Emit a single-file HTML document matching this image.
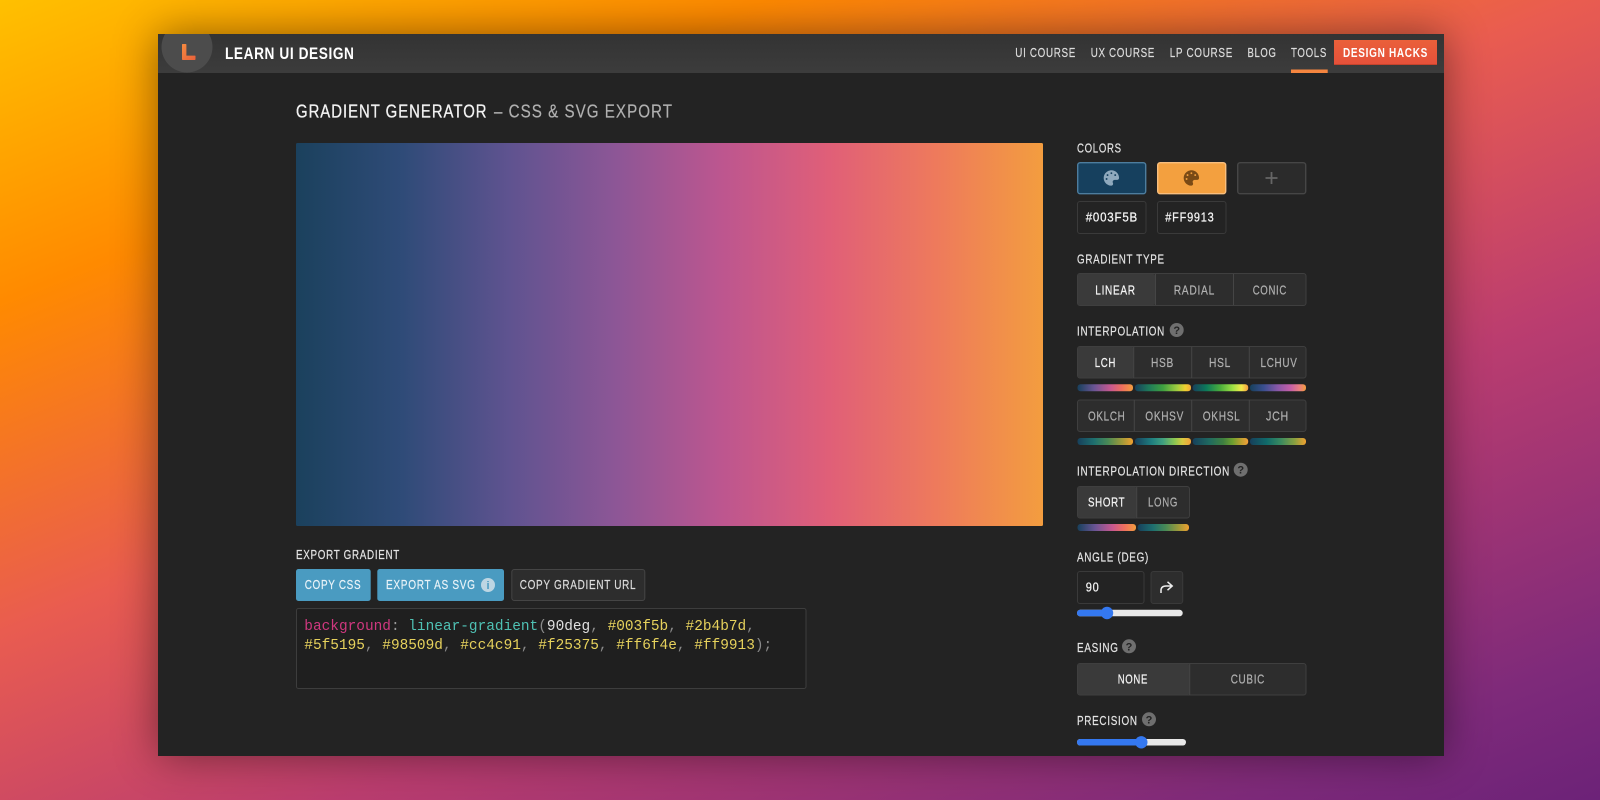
<!DOCTYPE html>
<html lang="en"><head><meta charset="utf-8"><title>Gradient Generator</title>
<style>
html,body{margin:0;padding:0;width:1600px;height:800px;overflow:hidden;background:linear-gradient(158.2deg,#ffc000 0%,#ff8a00 21%,#e95c50 44%,#bb3d6f 65%,#7e2a7a 90%,#6c2278 100%)}
#win{position:absolute;left:158px;top:34px;width:1286px;height:722px;background:#232323;box-shadow:0 0 40px rgba(0,0,0,.45)}
svg{position:absolute;left:0;top:0}
text{font-family:"Liberation Sans",sans-serif;font-size:13px;fill:#ddd;stroke:#ddd;stroke-width:.2;font-kerning:normal;letter-spacing:.9px}
.l{fill:#e4e4e4;stroke:#e4e4e4;font-size:12.5px}
.a{fill:#f2f2f2;stroke:#f2f2f2;stroke-width:.3}
.b{fill:#b0b0b0;stroke:#b0b0b0}
.w{fill:#f4f4f4;stroke:#f4f4f4;stroke-width:.25}
.m{font-family:"Liberation Mono",monospace;font-size:14.45px;letter-spacing:0;stroke:none}
.q{font-size:11px;font-weight:bold;fill:#232323;stroke:none;text-anchor:middle;letter-spacing:0}
</style></head><body>
<div id="win"></div>
<svg width="1600" height="800" viewBox="0 0 1600 800" xmlns="http://www.w3.org/2000/svg">
<defs>
<linearGradient id="hd" x1="0" y1="0" x2="0" y2="1"><stop offset="0" stop-color="#333"/><stop offset="1" stop-color="#3c3c3c"/></linearGradient>
<linearGradient id="main"><stop offset="0" stop-color="#1b415d"/><stop offset=".143" stop-color="#2f4b78"/><stop offset=".286" stop-color="#5f5390"/><stop offset=".429" stop-color="#8d5696"/><stop offset=".571" stop-color="#bd568f"/><stop offset=".714" stop-color="#e05f78"/><stop offset=".857" stop-color="#ee7a5c"/><stop offset="1" stop-color="#f39d3f"/></linearGradient>
<linearGradient id="lch"><stop offset="0" stop-color="#17405c"/><stop offset=".3" stop-color="#6a5595"/><stop offset=".6" stop-color="#c9588f"/><stop offset=".8" stop-color="#ee6f5f"/><stop offset="1" stop-color="#f39d3f"/></linearGradient>
<linearGradient id="hsb"><stop offset="0" stop-color="#17405c"/><stop offset=".25" stop-color="#1f7a5a"/><stop offset=".5" stop-color="#3fa040"/><stop offset=".75" stop-color="#a0cc40"/><stop offset=".9" stop-color="#f0d030"/><stop offset="1" stop-color="#f3a83a"/></linearGradient>
<linearGradient id="hsl"><stop offset="0" stop-color="#17405c"/><stop offset=".25" stop-color="#0d7a5a"/><stop offset=".5" stop-color="#4cae3c"/><stop offset=".72" stop-color="#9de045"/><stop offset=".88" stop-color="#f0e94a"/><stop offset="1" stop-color="#f39d3f"/></linearGradient>
<linearGradient id="luv"><stop offset="0" stop-color="#17405c"/><stop offset=".25" stop-color="#3b4f8f"/><stop offset=".5" stop-color="#8a58a8"/><stop offset=".72" stop-color="#c45fa8"/><stop offset=".88" stop-color="#ea7f80"/><stop offset="1" stop-color="#f39d3f"/></linearGradient>
<linearGradient id="okl"><stop offset="0" stop-color="#17405c"/><stop offset=".3" stop-color="#1e6f6f"/><stop offset=".55" stop-color="#4a8a55"/><stop offset=".8" stop-color="#a09a3a"/><stop offset="1" stop-color="#f0a030"/></linearGradient>
<linearGradient id="oks"><stop offset="0" stop-color="#17405c"/><stop offset=".3" stop-color="#1f7f80"/><stop offset=".5" stop-color="#40a080"/><stop offset=".72" stop-color="#90c850"/><stop offset=".85" stop-color="#d8c840"/><stop offset="1" stop-color="#f3a03a"/></linearGradient>
<linearGradient id="okh"><stop offset="0" stop-color="#17405c"/><stop offset=".3" stop-color="#1f6a60"/><stop offset=".55" stop-color="#3f8040"/><stop offset=".72" stop-color="#6fa030"/><stop offset=".88" stop-color="#c0a030"/><stop offset="1" stop-color="#f3a03a"/></linearGradient>
<linearGradient id="jch"><stop offset="0" stop-color="#17405c"/><stop offset=".3" stop-color="#106a6a"/><stop offset=".55" stop-color="#3a8a60"/><stop offset=".8" stop-color="#8aa040"/><stop offset="1" stop-color="#f0a030"/></linearGradient>
<linearGradient id="lg" x1="0" y1="0" x2="1" y2="1"><stop offset="0" stop-color="#f58a40"/><stop offset="1" stop-color="#e8603a"/></linearGradient>
<linearGradient id="dh" x1="0" y1="0" x2="0" y2="1"><stop offset="0" stop-color="#ea603a"/><stop offset="1" stop-color="#e5503a"/></linearGradient>
<clipPath id="hc"><rect x="158" y="34" width="1286" height="39"/></clipPath>
</defs>

<!-- header -->
<rect x="158" y="34" width="1286" height="39" fill="url(#hd)"/>
<circle cx="187" cy="47" r="25.5" fill="#4c4c4c" clip-path="url(#hc)"/>
<path d="M182 44.7q0-.7.7-.7h3q.7 0 .7.7V55.6h8.6q.5 0 .5.5v3.2q0 .7-.7.7h-12.100q-.7 0-.7-.7z" fill="url(#lg)"/>
<text x="225" y="59" style="font-size:16.5px;font-weight:bold;fill:#fff;stroke:none;letter-spacing:.7px" textLength="129.5" lengthAdjust="spacingAndGlyphs">LEARN UI DESIGN</text>
<text x="1015.3" y="57" textLength="60.7" lengthAdjust="spacingAndGlyphs">UI COURSE</text>
<text x="1090.7" y="57" textLength="64.3" lengthAdjust="spacingAndGlyphs">UX COURSE</text>
<text x="1169.7" y="57" textLength="63.3" lengthAdjust="spacingAndGlyphs">LP COURSE</text>
<text x="1247.5" y="57" textLength="29" lengthAdjust="spacingAndGlyphs">BLOG</text>
<text x="1291" y="57" textLength="36" lengthAdjust="spacingAndGlyphs">TOOLS</text>
<rect x="1291" y="69.5" width="36.7" height="3.5" fill="#f5853f"/>
<rect x="1334" y="40" width="103" height="25" fill="url(#dh)"/>
<rect x="1334" y="64" width="103" height="1" fill="#c6432c"/>
<text x="1343" y="57" style="font-weight:bold;fill:#fff;stroke:none" textLength="85" lengthAdjust="spacingAndGlyphs">DESIGN HACKS</text>

<!-- title -->
<text x="296" y="117.7" class="a" style="font-size:18px;letter-spacing:1.2px" textLength="191.5" lengthAdjust="spacingAndGlyphs">GRADIENT GENERATOR</text>
<text x="494" y="117.7" class="b" style="font-size:18px;letter-spacing:1.2px" textLength="179" lengthAdjust="spacingAndGlyphs">– CSS &amp; SVG EXPORT</text>

<!-- gradient -->
<rect x="296" y="143" width="747" height="383" rx="1.5" fill="url(#main)"/>

<!-- export -->
<text x="296" y="559" class="l" textLength="104" lengthAdjust="spacingAndGlyphs">EXPORT GRADIENT</text>
<rect x="296" y="569" width="74.7" height="32" rx="2.5" fill="#4a9bc1"/>
<text x="304.7" y="589" style="fill:#e9f3f8;stroke:#e9f3f8" textLength="56.6" lengthAdjust="spacingAndGlyphs">COPY CSS</text>
<rect x="377.3" y="569" width="126.7" height="32" rx="2.5" fill="#4a9bc1"/>
<text x="386" y="589" style="fill:#e9f3f8;stroke:#e9f3f8" textLength="89.7" lengthAdjust="spacingAndGlyphs">EXPORT AS SVG</text>
<circle cx="488" cy="585" r="7" fill="#bdd6e3"/>
<text x="488" y="589" class="q" style="fill:#4a9bc1">i</text>
<rect x="511.8" y="569.5" width="133" height="31" rx="2.5" fill="#2d2d2d" stroke="#454545"/>
<text x="519.7" y="589" textLength="116.6" lengthAdjust="spacingAndGlyphs">COPY GRADIENT URL</text>
<rect x="296.5" y="608.5" width="509.5" height="80" rx="2" fill="#1f1f1f" stroke="#3d3d3d"/>
<text x="304.3" y="630" class="m" xml:space="preserve"><tspan fill="#d0387f">background</tspan><tspan fill="#9a9a9a">: </tspan><tspan fill="#4fc1b4">linear-gradient</tspan><tspan fill="#8a8a8a">(</tspan><tspan fill="#e0e0e0">90deg</tspan><tspan fill="#8a8a8a">, </tspan><tspan fill="#e6d15c">#003f5b</tspan><tspan fill="#8a8a8a">, </tspan><tspan fill="#e6d15c">#2b4b7d</tspan><tspan fill="#8a8a8a">,</tspan></text>
<text x="304.3" y="649" class="m" xml:space="preserve"><tspan fill="#e6d15c">#5f5195</tspan><tspan fill="#8a8a8a">, </tspan><tspan fill="#e6d15c">#98509d</tspan><tspan fill="#8a8a8a">, </tspan><tspan fill="#e6d15c">#cc4c91</tspan><tspan fill="#8a8a8a">, </tspan><tspan fill="#e6d15c">#f25375</tspan><tspan fill="#8a8a8a">, </tspan><tspan fill="#e6d15c">#ff6f4e</tspan><tspan fill="#8a8a8a">, </tspan><tspan fill="#e6d15c">#ff9913</tspan><tspan fill="#8a8a8a">);</tspan></text>

<!-- colors -->
<text x="1077" y="152.3" class="l" textLength="44.7" lengthAdjust="spacingAndGlyphs">COLORS</text>
<rect x="1077.7" y="162.7" width="68" height="31" rx="2.5" fill="#16405e" stroke="#4d7d9e" stroke-width="1.4"/>
<rect x="1157.7" y="162.7" width="68" height="31" rx="2.5" fill="#f3a03f" stroke="#f8be7e" stroke-width="1.4"/>
<rect x="1237.7" y="162.7" width="68" height="31" rx="2.5" fill="#2b2b2b" stroke="#464646" stroke-width="1.4"/>
<path transform="translate(1103.7,170.3) scale(.03)" fill="#8fa9bd" d="M204.3 5C104.9 24.4 24.8 104.3 5.2 203.4c-37 187 131.7 326.4 258.8 306.7 41.2-6.4 61.4-54.6 42.5-91.7-23.1-45.4 9.9-98.4 60.9-98.4h79.7c35.8 0 64.8-29.6 64.9-65.3C511.5 97.1 368.1-26.9 204.3 5zM96 320c-17.7 0-32-14.3-32-32s14.3-32 32-32 32 14.3 32 32-14.3 32-32 32zm32-128c-17.7 0-32-14.3-32-32s14.3-32 32-32 32 14.3 32 32-14.3 32-32 32zm128-64c-17.7 0-32-14.3-32-32s14.3-32 32-32 32 14.3 32 32-14.3 32-32 32zm128 64c-17.7 0-32-14.3-32-32s14.3-32 32-32 32 14.3 32 32-14.3 32-32 32z"/>
<path transform="translate(1183.7,170.3) scale(.03)" fill="#7a4a15" d="M204.3 5C104.9 24.4 24.8 104.3 5.2 203.4c-37 187 131.7 326.4 258.8 306.7 41.2-6.4 61.4-54.6 42.5-91.7-23.1-45.4 9.9-98.4 60.9-98.4h79.7c35.8 0 64.8-29.6 64.9-65.3C511.5 97.1 368.1-26.9 204.3 5zM96 320c-17.7 0-32-14.3-32-32s14.3-32 32-32 32 14.3 32 32-14.3 32-32 32zm32-128c-17.7 0-32-14.3-32-32s14.3-32 32-32 32 14.3 32 32-14.3 32-32 32zm128-64c-17.7 0-32-14.3-32-32s14.3-32 32-32 32 14.3 32 32-14.3 32-32 32zm128 64c-17.7 0-32-14.3-32-32s14.3-32 32-32 32 14.3 32 32-14.3 32-32 32z"/>
<path d="M1271.5 172v12M1265.5 178h12" stroke="#666" stroke-width="1.8" fill="none"/>
<rect x="1077.5" y="201.5" width="68.5" height="32" rx="2.5" fill="#232323" stroke="#3a3a3a"/>
<rect x="1157.5" y="201.5" width="68.5" height="32" rx="2.5" fill="#232323" stroke="#3a3a3a"/>
<text x="1085.7" y="221.7" class="w" textLength="52.3" lengthAdjust="spacingAndGlyphs">#003F5B</text>
<text x="1165.3" y="221.7" class="w" textLength="49.2" lengthAdjust="spacingAndGlyphs">#FF9913</text>

<!-- gradient type -->
<text x="1077" y="263.7" class="l" textLength="87.7" lengthAdjust="spacingAndGlyphs">GRADIENT TYPE</text>
<rect x="1077.5" y="273.5" width="228.5" height="32" rx="2.5" fill="#2d2d2d" stroke="#3f3f3f"/>
<rect x="1078" y="274" width="77" height="31" rx="2" fill="#3a3a3a"/>
<path d="M1155.5 274v31M1233.5 274v31" stroke="#454545"/>
<text x="1095.3" y="294.3" class="w" textLength="40.4" lengthAdjust="spacingAndGlyphs">LINEAR</text>
<text x="1173.7" y="294.3" class="b" textLength="41.3" lengthAdjust="spacingAndGlyphs">RADIAL</text>
<text x="1252.7" y="294.3" class="b" textLength="34.3" lengthAdjust="spacingAndGlyphs">CONIC</text>

<!-- interpolation -->
<text x="1077" y="335.7" class="l" textLength="88" lengthAdjust="spacingAndGlyphs">INTERPOLATION</text>
<circle cx="1176.7" cy="330" r="7" fill="#6f6f6f"/><text x="1176.7" y="334" class="q">?</text>
<rect x="1077.5" y="346.5" width="228.5" height="31.5" rx="2.5" fill="#2d2d2d" stroke="#3f3f3f"/>
<rect x="1078" y="347" width="55.5" height="30.5" rx="2" fill="#3a3a3a"/>
<path d="M1133.7 347v31M1191.7 347v31M1249.3 347v31" stroke="#454545"/>
<text x="1094.7" y="367" class="w" textLength="21.3" lengthAdjust="spacingAndGlyphs">LCH</text>
<text x="1151" y="367" class="b" textLength="23" lengthAdjust="spacingAndGlyphs">HSB</text>
<text x="1209" y="367" class="b" textLength="22" lengthAdjust="spacingAndGlyphs">HSL</text>
<text x="1260.5" y="367" class="b" textLength="37" lengthAdjust="spacingAndGlyphs">LCHUV</text>
<rect x="1077.5" y="384.3" width="55.5" height="7" rx="3" fill="url(#lch)"/>
<rect x="1135" y="384.3" width="56" height="7" rx="3" fill="url(#hsb)"/>
<rect x="1192.7" y="384.3" width="55.5" height="7" rx="3" fill="url(#hsl)"/>
<rect x="1250" y="384.3" width="56" height="7" rx="3" fill="url(#luv)"/>
<rect x="1077.5" y="400" width="228.5" height="31.5" rx="2.5" fill="#2d2d2d" stroke="#3f3f3f"/>
<path d="M1134.3 400v31M1191.7 400v31M1249.3 400v31" stroke="#454545"/>
<text x="1088" y="420.3" class="b" textLength="37.5" lengthAdjust="spacingAndGlyphs">OKLCH</text>
<text x="1145.3" y="420.3" class="b" textLength="38.7" lengthAdjust="spacingAndGlyphs">OKHSV</text>
<text x="1202.7" y="420.3" class="b" textLength="37.8" lengthAdjust="spacingAndGlyphs">OKHSL</text>
<text x="1266" y="420.3" class="b" textLength="23" lengthAdjust="spacingAndGlyphs">JCH</text>
<rect x="1077.5" y="438" width="55.5" height="7" rx="3" fill="url(#okl)"/>
<rect x="1135" y="438" width="56" height="7" rx="3" fill="url(#oks)"/>
<rect x="1192.7" y="438" width="55.5" height="7" rx="3" fill="url(#okh)"/>
<rect x="1250" y="438" width="56" height="7" rx="3" fill="url(#jch)"/>

<!-- direction -->
<text x="1077" y="475.3" class="l" textLength="153" lengthAdjust="spacingAndGlyphs">INTERPOLATION DIRECTION</text>
<circle cx="1240.7" cy="469.7" r="7" fill="#6f6f6f"/><text x="1240.7" y="473.7" class="q">?</text>
<rect x="1077.5" y="486.5" width="112" height="31.5" rx="2.5" fill="#2d2d2d" stroke="#3f3f3f"/>
<rect x="1078" y="487" width="58.5" height="30.5" rx="2" fill="#3a3a3a"/>
<path d="M1136.7 487v31" stroke="#454545"/>
<text x="1088" y="506.7" class="w" textLength="37.3" lengthAdjust="spacingAndGlyphs">SHORT</text>
<text x="1148" y="506.7" class="b" textLength="30" lengthAdjust="spacingAndGlyphs">LONG</text>
<rect x="1077.5" y="524" width="58.5" height="7" rx="3" fill="url(#lch)"/>
<rect x="1137.7" y="524" width="51.3" height="7" rx="3" fill="url(#okl)"/>

<!-- angle -->
<text x="1077" y="561.7" class="l" textLength="72" lengthAdjust="spacingAndGlyphs">ANGLE (DEG)</text>
<rect x="1077.5" y="571.5" width="66.5" height="32" rx="2.5" fill="#232323" stroke="#3a3a3a"/>
<text x="1085.7" y="591.3" class="w" textLength="13.8" lengthAdjust="spacingAndGlyphs">90</text>
<rect x="1151" y="571.5" width="31.7" height="32" rx="2.5" fill="#2d2d2d" stroke="#3a3a3a"/>
<path d="M1161 593v-2.5q0-4.5 5-4.5h6M1167.5 581.8l4.7 4.2-4.7 4.2" fill="none" stroke="#eee" stroke-width="1.5"/>
<rect x="1077" y="609.8" width="105.7" height="6.5" rx="3.2" fill="#e8e8e8"/>
<rect x="1077" y="609.8" width="30" height="6.5" rx="3.2" fill="#3478f0"/>
<circle cx="1107" cy="613" r="6.2" fill="#3478f0"/>

<!-- easing -->
<text x="1077" y="652" class="l" textLength="41.7" lengthAdjust="spacingAndGlyphs">EASING</text>
<circle cx="1129" cy="646.3" r="7" fill="#6f6f6f"/><text x="1129" y="650.3" class="q">?</text>
<rect x="1077.5" y="663.5" width="228.5" height="31.5" rx="2.5" fill="#2d2d2d" stroke="#3f3f3f"/>
<rect x="1078" y="664" width="111.5" height="30.5" rx="2" fill="#3a3a3a"/>
<path d="M1189.7 664v31" stroke="#454545"/>
<text x="1117.7" y="683.3" class="w" textLength="30.3" lengthAdjust="spacingAndGlyphs">NONE</text>
<text x="1230.7" y="683.3" class="b" textLength="34.3" lengthAdjust="spacingAndGlyphs">CUBIC</text>

<!-- precision -->
<text x="1077" y="725" class="l" textLength="60.7" lengthAdjust="spacingAndGlyphs">PRECISION</text>
<circle cx="1149" cy="719.3" r="7" fill="#6f6f6f"/><text x="1149" y="723.3" class="q">?</text>
<rect x="1077" y="739" width="109" height="6.5" rx="3.2" fill="#e8e8e8"/>
<rect x="1077" y="739" width="64" height="6.5" rx="3.2" fill="#3478f0"/>
<circle cx="1141.3" cy="742.3" r="6.2" fill="#3478f0"/>
</svg>
</body></html>
